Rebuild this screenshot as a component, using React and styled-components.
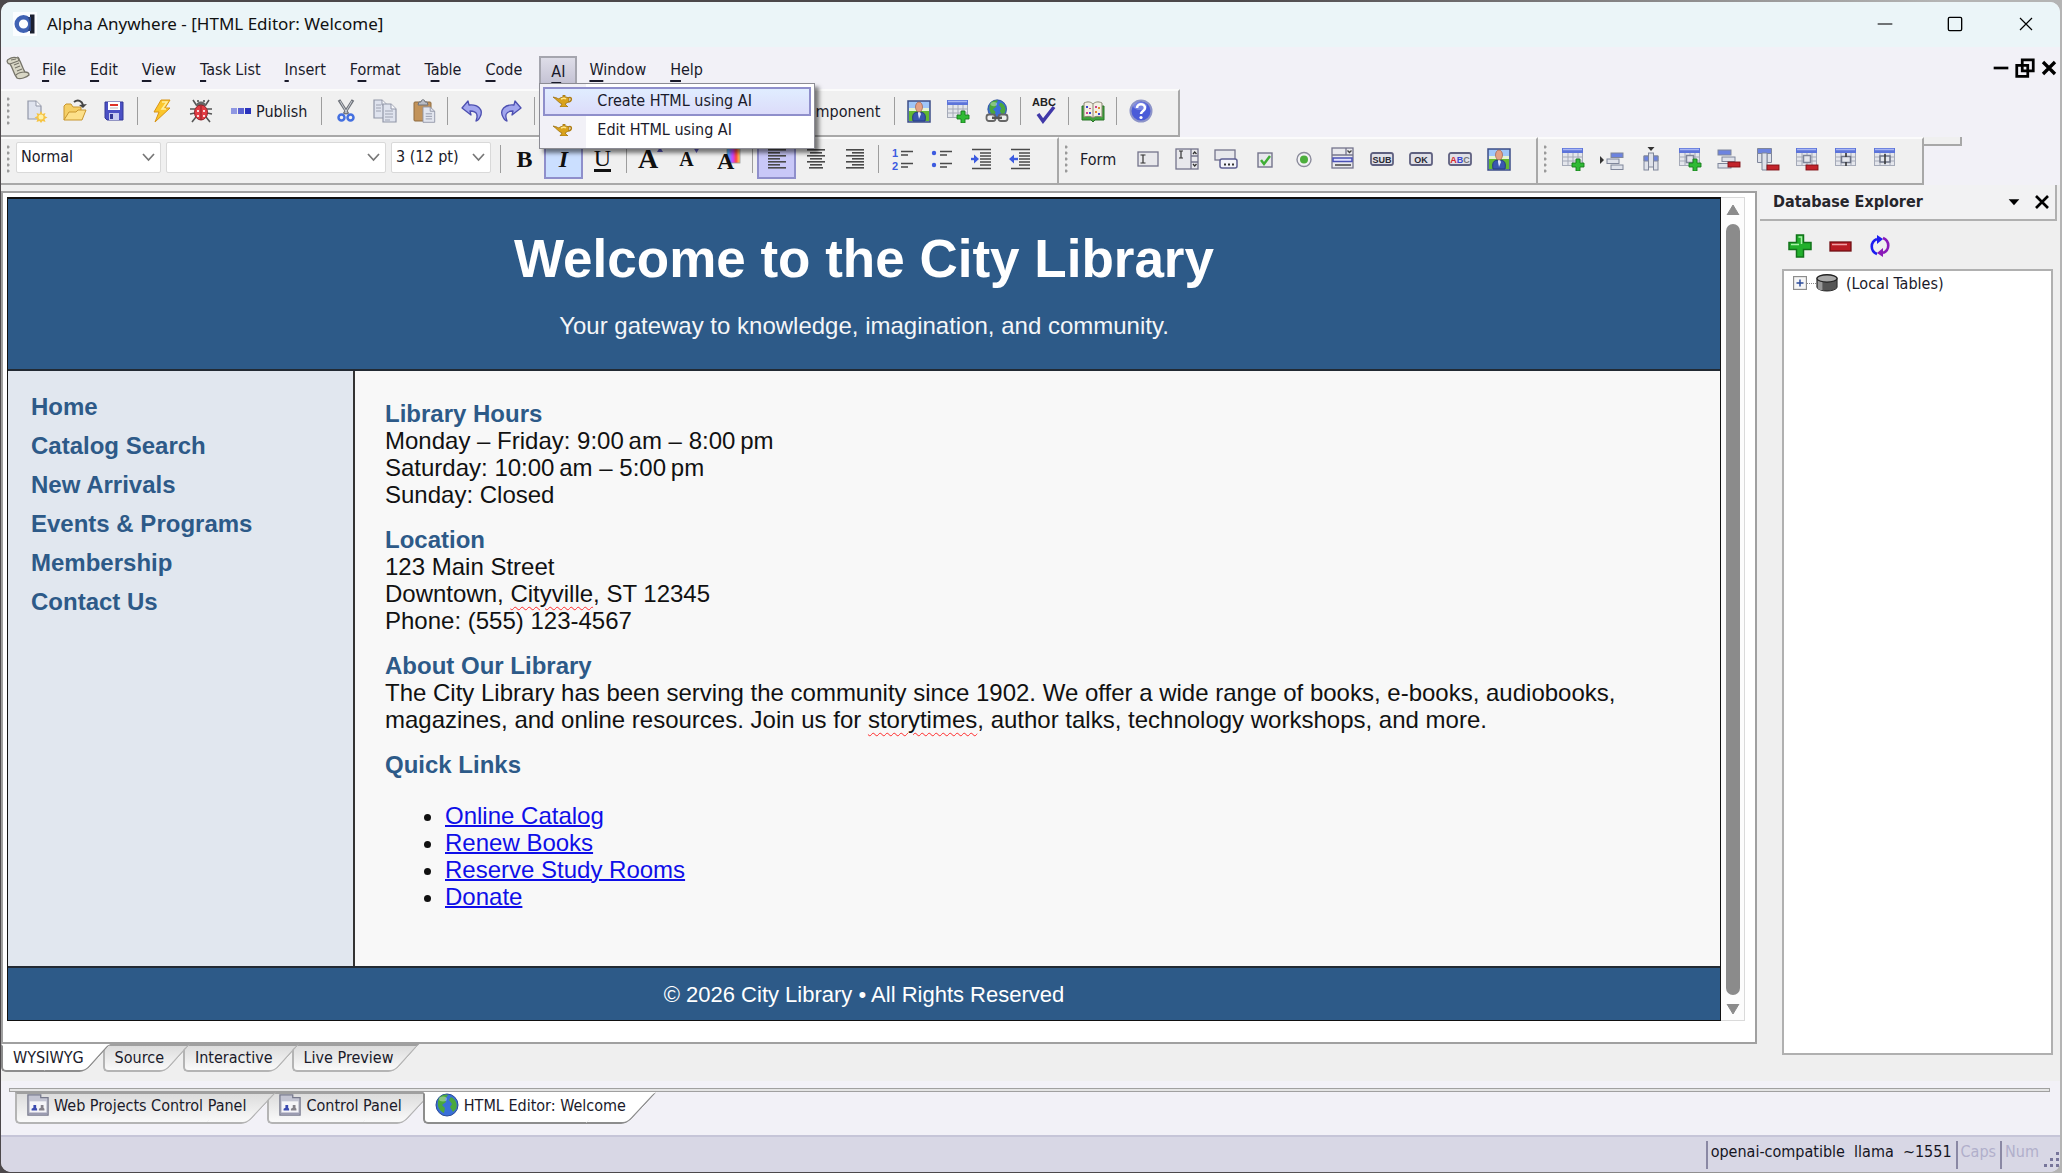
import React from 'react';
import styled, { createGlobalStyle, css } from 'styled-components';

const uiFont = `'DejaVu Sans Condensed', 'DejaVu Sans', 'Noto Sans', sans-serif`;
const pageFont = `'Liberation Sans', Arial, sans-serif`;
const titleFont = `'Noto Sans', 'Open Sans', sans-serif`;

const GlobalStyle = createGlobalStyle`
  * {
    box-sizing: border-box;
  }
  body {
    margin: 0;
    background: #4c484b;
    font-family: ${uiFont};
    font-size: 16px;
    color: #1a1a2a;
  }
  button, select {
    font: inherit;
    color: inherit;
  }
`;

const Desktop = styled.div`
  display: flex;
  min-height: 100vh;
  padding: 2px 2px 1px 1px;
  background: linear-gradient(90deg, #4c484b 0%, #4c484b 60%, #b4b4b4 94%);
`;

const Window = styled.div`
  flex: 1;
  min-width: 0;
  display: flex;
  flex-direction: column;
  background: #f2f1f7;
  border-radius: 10px;
`;

/* title bar */

const TitleBar = styled.header`
  display: flex;
  align-items: center;
  height: 45px;
  padding: 0 12px 2px 12px;
  background: #ebf5f8;
  border-radius: 10px 10px 0 0;
`;

const Title = styled.h1`
  flex: 1;
  margin: 0 0 0 10px;
  font-family: ${titleFont};
  font-size: 17px;
  font-weight: 400;
  color: #111;
`;

const CaptionButton = styled.button`
  display: flex;
  align-items: center;
  justify-content: center;
  width: 70px;
  height: 40px;
  padding: 0;
  border: none;
  background: none;

  &:last-child {
    width: 44px;
    margin-left: 14px;
  }
`;

/* menu */

const MenuBar = styled.nav`
  display: flex;
  align-items: center;
  height: 42px;
  padding: 0 3px 0 5px;
`;

const MenuItem = styled.button`
  position: relative;
  height: 30px;
  padding: 0 12px;
  margin-top: ${props => (props.$open ? '6px' : '4px')};
  border: 2px solid transparent;
  border-width: 2px 0;
  background: none;
  line-height: 24px;

  &::first-letter {
    text-decoration: ${props => (props.$plain ? 'none' : 'underline')};
    text-underline-offset: 5px;
    text-decoration-thickness: 2px;
  }

  u {
    text-underline-offset: 5px;
    text-decoration-thickness: 2px;
  }

  ${props => props.$open && css`
    padding: 0 10px;
    border: 2px solid #a5a5ae;
    border-bottom: none;
    background: linear-gradient(#dedde8, #c2c0d2);
  `}
`;

const MenuWrap = styled.div`
  position: relative;
  margin-left: 5px;
`;

const Dropdown = styled.div`
  position: absolute;
  z-index: 10;
  top: 33px;
  left: 0;
  width: 276px;
  padding: 3px;
  border: 1px solid #8c8c94;
  background: linear-gradient(90deg, #f2f1f7 46px, #fff 46px);
  box-shadow: 4px 4px 4px rgba(0, 0, 0, 0.5);
`;

const DropdownItem = styled.button`
  display: flex;
  align-items: center;
  gap: 24px;
  width: 100%;
  height: 29px;
  padding: 0 8px 2px;
  border: 2px solid ${props => (props.$active ? '#8f8fcb' : 'transparent')};
  background: ${props => (props.$active ? 'linear-gradient(#e0edff, #dcdcfa)' : 'none')};
`;

const MdiButtons = styled.div`
  display: flex;
  align-items: center;
  gap: 5px;
  margin-left: auto;
`;

const FlatButton = styled.button`
  display: flex;
  padding: 0;
  border: none;
  background: none;
`;

/* toolbars */

const ToolbarRow = styled.div`
  display: flex;
  align-items: flex-start;
`;

const Toolbar = styled.div`
  display: flex;
  align-items: center;
  height: 48px;
  padding: 0 18px 4px 4px;
  border-top: 2px solid #fbfbfb;
  border-right: 2px solid #a8a8a8;
  border-bottom: 2px solid #a8a8a8;
  background: #f0f0f0;
`;

const ToolbarStub = styled.div`
  width: 38px;
  height: 9px;
  border-right: 2px solid #a8a8a8;
  border-bottom: 2px solid #a8a8a8;
  background: #f0f0f0;
`;

const Grip = styled.span`
  width: 3px;
  height: 28px;
  margin: 0 6px 0 2px;
  background: radial-gradient(circle at 1px 2px, #9a9a9a 1px, transparent 2px) 0 0 / 3px 6px;
`;

const Separator = styled.span`
  width: 1px;
  height: 28px;
  margin: 0 4px;
  background: #9d9d9d;
`;

const ToolButton = styled.button`
  display: flex;
  align-items: center;
  justify-content: center;
  gap: 4px;
  min-width: 39px;
  height: 40px;
  padding: 0 ${props => (props.$wide ? 8 : 0)}px;
  border: 2px solid ${props => (props.$on ? '#8f8fcb' : 'transparent')};
  background: ${props => props.$on || 'none'};
`;

const CoveredTools = styled.div`
  display: flex;
  justify-content: flex-end;
  width: 351px;
`;

const SelectBox = styled.label`
  position: relative;
  display: flex;
  width: ${props => props.$width}px;
  height: 31px;
  margin: 0 5px 4px 0;

  svg {
    position: absolute;
    right: 5px;
    top: 9px;
    pointer-events: none;
  }
`;

const Select = styled.select`
  appearance: none;
  width: 100%;
  padding: 0 4px 2px;
  border: 1px solid #d9d9d9;
  border-radius: 2px;
  background: #fff;
`;

const ToolLabel = styled.span`
  margin: 0 12px 0 6px;
`;

/* document area */

const Main = styled.main`
  flex: 1;
  display: flex;
  gap: 3px;
  background: #efefef;
`;

const EditorColumn = styled.section`
  flex: 1;
  min-width: 0;
  display: flex;
  flex-direction: column;
  padding: 6px 0 9px;
`;

const DocumentFrame = styled.div`
  flex: 1;
  display: flex;
  padding: 4px 10px 21px 4px;
  border: 2px solid #a0a0a0;
  background: #fff;
`;

const Page = styled.div`
  flex: 1;
  display: flex;
  flex-direction: column;
  border: 1px solid #111;
  border-top-width: 2px;
  background: #f8f8f8;
  font-family: ${pageFont};
  font-size: 24px;
  line-height: 27px;
  color: #111;
`;

const PageHeader = styled.div`
  padding: 29px 20px 30px;
  border-bottom: 2px solid #222a33;
  background: #2d5a88;
  color: #f4f6f8;
  text-align: center;

  h2 {
    margin: 0 0 23px;
    font-size: 53px;
    line-height: 61px;
    color: #fff;
  }

  p {
    margin: 0;
  }
`;

const PageBody = styled.div`
  flex: 1;
  display: flex;
`;

const PageNav = styled.div`
  width: 347px;
  padding: 22px 23px;
  border-right: 2px solid #333;
  background: #e1e7ef;
`;

const NavEntry = styled.div`
  margin-bottom: 12px;
  font-weight: 700;
  color: #2d5a88;
`;

const Article = styled.div`
  flex: 1;
  padding: 29px 30px;
`;

const Block = styled.section`
  margin-bottom: 18px;

  h3 {
    margin: 0;
    font-size: 24px;
    color: #2d5a88;
  }

  p {
    margin: 0;
  }

  ul {
    margin: 24px 0 0;
    padding-left: 60px;
  }

  a {
    color: #0f0fe8;
    text-decoration-thickness: 2px;
  }
`;

const Misspelled = styled.span`
  text-decoration: underline wavy #ff2a2a 1px;
  text-underline-offset: 4px;
`;

const PageFooter = styled.div`
  padding: 13px 20px 12px;
  border-top: 2px solid #222a33;
  background: #2d5a88;
  font-size: 22px;
  color: #fff;
  text-align: center;
`;

const Scrollbar = styled.div`
  display: flex;
  flex-direction: column;
  align-items: center;
  gap: 9px;
  width: 24px;
  padding: 6px 0 5px;
  border: 1px solid #dadada;
  border-left: none;
  background: #fcfcfc;
`;

const ScrollThumb = styled.div`
  flex: 1;
  width: 14px;
  border-radius: 7px;
  background: #8b8b8b;
`;

/* slanted tabs */

const TabStrip = styled.div`
  display: flex;
  align-items: flex-start;
`;

const TabButton = styled.button`
  position: relative;
  z-index: ${props => props.$layer};
  display: flex;
  align-items: center;
  gap: 5px;
  height: ${props => (props.$tall ? 32 : 28)}px;
  padding: 0 ${props => (props.$tall ? 16 : 14)}px ${props => (props.$tall ? 6 : 2)}px 12px;
  margin-right: ${props => (props.$tall ? 5 : 5)}px;
  border: none;
  background: none;

  &::before,
  &::after {
    content: '';
    position: absolute;
    z-index: -1;
    top: 0;
    bottom: 0;
    border: 2px solid ${props => (props.$active ? '#8d8d8d' : '#b4b4b4')};
    border-top-color: ${props => (props.$active ? '#fff' : '#a0a0a0')};
    background: ${props => (props.$active ? '#fff' : 'linear-gradient(#dcdcdc, #fafafa)')};
  }

  &::before {
    left: 0;
    right: 24px;
    border-right: none;
    border-radius: 0 0 0 5px;
  }

  &::after {
    width: 40px;
    right: 0;
    border-left: none;
    border-radius: 0 0 6px 0;
    transform: skewX(${props => (props.$tall ? -43 : -42)}deg);
  }
`;

const TabLabel = styled.span`
  position: relative;
  z-index: 1;
`;

const TabIcon = styled.span`
  position: relative;
  z-index: 1;
  display: flex;
`;

const WindowTabs = styled.div`
  height: 54px;
  padding: 7px 10px 0 8px;
`;

const WindowTabsRail = styled.div`
  height: 4px;
  border: 1px solid #a0a0a0;
  background: #e4e4e4;
`;

const WindowTabStrip = styled(TabStrip)`
  padding-left: 6px;
`;

/* database explorer */

const Explorer = styled.aside`
  display: flex;
  flex-direction: column;
  width: 300px;
  padding-bottom: 26px;
`;

const ExplorerHeader = styled.div`
  display: flex;
  align-items: center;
  gap: 12px;
  height: 36px;
  margin-right: 3px;
  padding: 0 5px 1px 13px;
  border-right: 2px solid #b0b0b0;
  border-bottom: 2px solid #b0b0b0;
  background: #f2f2f3;

  h2 {
    flex: 1;
    margin: 0;
    font-size: 16px;
    font-weight: 700;
    color: #26262c;
  }
`;

const ExplorerTools = styled.div`
  display: flex;
  gap: 16px;
  padding: 13px 28px 11px;
`;

const Tree = styled.div`
  flex: 1;
  margin: 0 7px 0 22px;
  padding: 0 9px;
  border: 2px solid #b0b0b0;
  background: #fff;
`;

const TreeNode = styled.div`
  display: flex;
  align-items: center;
  height: 24px;
`;

const TreeLine = styled.span`
  width: 9px;
  border-top: 1px dotted #888;
`;

const NodeLabel = styled.span`
  margin-left: 8px;
`;

/* status bar */

const StatusBar = styled.footer`
  display: flex;
  align-items: center;
  justify-content: flex-end;
  height: 37px;
  border-top: 2px solid #c6c5d8;
  border-radius: 0 0 10px 10px;
  background: #d8d7e5;
`;

const StatusCell = styled.span`
  height: 28px;
  padding: 0 4px 0 3px;
  border-left: 2px solid #8a88a4;
  line-height: 22px;
  white-space: pre;
  color: ${props => (props.$dim ? '#b1afcb' : '#15151f')};
`;

const ResizeGrip = styled.svg`
  align-self: flex-end;
  margin: 0 0 4px;
`;

/* icons */

const Icon = ({ size = 24, children }) => (
  <svg width={size} height={size} viewBox="0 0 24 24" fill="none" aria-hidden="true">
    {children}
  </svg>
);

const LogoIcon = () => (
  <Icon>
    <rect width="24" height="24" fill="#fbfdff" />
    <circle cx="10.500" cy="12" r="6.800" stroke="#3f62b4" strokeWidth="4.400" />
    <path d="M17 2.500h4.500v19H17z" fill="#1c2030" />
    <path d="M14.500 5c3 4 3 10 0 14H18V5z" fill="#2c447e" />
  </Icon>
);

const ScrollIcon = () => (
  <Icon>
    <path d="M3 3c-3 1-2 5 1 5 3 4 3 9 7 14 3 2 10-1 12-3 0-3-3-3-4-3-3-4-3-9-7-14-3-1-7-.5-9 1z" fill="#d9d7c6" stroke="#77756a" strokeWidth="1.300" />
    <path d="M4 8l8-3c2-1 1-4-1-4M10 19c2-2 5-3 9-3M8 9l5-2M9 12l5-2M11 15l5-2M5 4l5-1" stroke="#77756a" strokeWidth="1.200" />
  </Icon>
);

const PageShape = ({ x = 0, y = 0 }) => (
  <g transform={`translate(${x} ${y})`}>
    <path d="M0 0h8l5 5v13H0z" fill="#dfe3ee" stroke="#9297a8" strokeWidth="1.200" />
    <path d="M8 0v5h5" fill="#f7f8fc" stroke="#9297a8" />
  </g>
);

const NewIcon = () => (
  <Icon>
    <PageShape x={4} y={2} />
    <path d="M17 12l1.500 3 3-1-1 3 3 1.500-3 1.500 1 3-3-1-1.500 2-1.500-2-3 1 1-3-3-1.500 3-1.500-1-3 3 1z" fill="#f6c443" />
    <circle cx="17" cy="18" r="2.500" fill="#fff1a8" />
  </Icon>
);

const OpenIcon = () => (
  <Icon>
    <path d="M1 21V7l2-2h5l2 3h8v4" fill="#f5cf66" stroke="#c8962e" />
    <path d="M1 21l5-8h7l2-2h8l-4 10z" fill="#fce08a" stroke="#c8962e" />
    <path d="M11 3c4-3 8-1 9 3" stroke="#444" strokeWidth="2" />
    <path d="M16 6l8-1-4 4z" fill="#444" />
  </Icon>
);

const SaveIcon = () => (
  <Icon>
    <path d="M3 3h18v18H5l-2-2z" fill="#4b50c4" stroke="#343896" />
    <rect x="6" y="3" width="12" height="8" fill="#fff" />
    <path d="M8 6h8" stroke="#df3328" strokeWidth="2" />
    <path d="M8 9h8" stroke="#bbb" />
    <rect x="7" y="14" width="10" height="7" fill="#c8cbf0" />
    <rect x="8" y="15" width="3" height="5" fill="#343896" />
  </Icon>
);

const BoltIcon = () => (
  <Icon>
    <path d="M11 1h9l-5 8h5L5 23l4-10H4z" fill="#fbc62c" stroke="#d99414" />
    <path d="M12 3h5l-5 7h4" stroke="#ffef9d" strokeWidth="1.500" />
  </Icon>
);

const BugIcon = () => (
  <Icon>
    <path d="M8 7L4 1M16 7l4-6M6 10H1M18 10h5M6 14l-5 1M18 14l5 1M7 18l-4 5M17 18l4 5M9 3V1M15 3V1" stroke="#555" strokeWidth="1.600" />
    <path d="M7 7c0-6 10-6 10 0z" fill="#666" />
    <ellipse cx="12" cy="13.500" rx="6.500" ry="7.500" fill="#e23b43" stroke="#8d2026" />
    <path d="M12 7v14" stroke="#8d2026" />
    <path d="M9 11v2M15 11v2M9 16v2M15 16v2" stroke="#fff" strokeWidth="1.600" />
  </Icon>
);

const PublishIcon = () => (
  <svg width="22" height="24" viewBox="0 0 22 24" aria-hidden="true">
    <rect x="1" y="9" width="6" height="6" fill="#8f97e2" />
    <rect x="8" y="9" width="6" height="6" fill="#5b63d2" />
    <rect x="15" y="9" width="6" height="6" fill="#2a33bd" />
  </svg>
);

const CutIcon = () => (
  <Icon>
    <path d="M5 1l9 14M19 1l-9 14" stroke="#6f737a" strokeWidth="3" />
    <path d="M6 2l7 12M18 2l-7 12" stroke="#c9cdd4" />
    <circle cx="7.500" cy="18.500" r="3" stroke="#4470e0" strokeWidth="2.500" />
    <circle cx="16.500" cy="18.500" r="3" stroke="#4470e0" strokeWidth="2.500" />
  </Icon>
);

const CopyIcon = () => (
  <Icon>
    <PageShape x={1} y={1} />
    <PageShape x={10} y={5} />
    <path d="M3 6h5M3 9h5M3 12h5M12 12h8M12 15h8M12 18h8M12 21h5" stroke="#9ea3b2" />
  </Icon>
);

const PasteIcon = () => (
  <Icon>
    <rect x="2" y="3" width="17" height="19" rx="1" fill="#c2935a" stroke="#8e6a3e" />
    <path d="M6 6l1-3h2c0-3 4-3 4 0h2l1 3z" fill="#b9bcc4" stroke="#6f737a" />
    <g transform="translate(11 8) scale(.9 .85)">
      <path d="M0 0h8l5 5v13H0z" fill="#e2e5ee" stroke="#8f94a5" />
      <path d="M8 0v5h5M3 8h7M3 11h7M3 14h7" stroke="#8f94a5" />
    </g>
  </Icon>
);

const UndoShape = () => (
  <path d="M2 9L8 2l1 4c9-1 15 5 11 12-1 2-2 4-4 4 2-5 2-10-6-10l1 4z" fill="#a2a6ee" stroke="#4c4fb0" strokeWidth="1.300" strokeLinejoin="round" />
);

const UndoIcon = () => <Icon><UndoShape /></Icon>;
const RedoIcon = () => <Icon><g transform="translate(24 0) scale(-1 1)"><UndoShape /></g></Icon>;

const PictureIcon = () => (
  <Icon>
    <rect x="1" y="2" width="22" height="21" fill="#9fc6f8" stroke="#3d4d86" strokeWidth="1.500" />
    <path d="M2 12h20v10H2z" fill="#63b832" />
    <path d="M2 9h20v3H2z" fill="#e6f4d2" />
    <path d="M6 22c-1-6 0-9 6-9s7 3 6 9z" fill="#3a56b0" stroke="#243a80" />
    <path d="M11 13h2l1 2-2 5-1-5z" fill="#dfe6ff" />
    <ellipse cx="12" cy="8" rx="3.500" ry="5" fill="#e3a184" stroke="#a0604c" strokeWidth=".700" />
  </Icon>
);

const GlobeShape = () => (
  <>
    <circle cx="12" cy="12" r="11" fill="#3a6fd8" stroke="#2a4c98" />
    <path d="M4 5c3-4 8-4 9-3l-3 4 1 3-4 3 3 3-1 5c-5-2-8-8-5-15zM16 4c5 2 7 8 5 12l-3 3-3-5 2-3-3-4z" fill="#4aa83c" />
    <ellipse cx="8" cy="6" rx="4" ry="2.500" fill="#fff" opacity=".35" />
  </>
);

const GlobeIcon = () => <Icon><GlobeShape /></Icon>;

const LinkIcon = () => (
  <Icon>
    <g transform="translate(2 0) scale(.85)"><GlobeShape /></g>
    <rect x="1.500" y="15.500" width="9" height="6.500" rx="2.500" fill="#eee" stroke="#666" strokeWidth="1.800" />
    <rect x="13.500" y="15.500" width="9" height="6.500" rx="2.500" fill="#eee" stroke="#666" strokeWidth="1.800" />
    <path d="M7 18.800h10" stroke="#555" strokeWidth="2.500" />
  </Icon>
);

const GridShape = ({ hole }) => (
  <>
    <rect x="1.500" y="1.500" width="20" height="17" fill="#e4e6ec" stroke="#a5aab8" />
    <path d="M1 1h21v5H1z" fill="#5c74da" />
    <path d="M2 2.500h19" stroke="#a9b7f3" strokeWidth="1.500" />
    <path d="M2 10h19M2 14h19M7 6v12M12 6v12M17 6v12" stroke="#a5aab8" />
    {hole && <rect x="8.500" y="8.500" width="7" height="7" fill="#e4e6ec" stroke="#7f869a" strokeWidth="1.500" />}
  </>
);

const PlusBadge = () => (
  <path d="M15 12h4v4h4v4h-4v4h-4v-4h-4v-4h4z" fill="#2fba35" stroke="#167a1b" strokeWidth=".900" />
);

const MinusBadge = ({ y = 16 }) => (
  <rect x="11" y={y} width="12" height="5" fill="#c3242c" stroke="#7e1116" strokeWidth=".900" />
);

const TablePlusIcon = () => <Icon><GridShape /><PlusBadge /></Icon>;
const CellPlusIcon = () => <Icon><GridShape hole /><PlusBadge /></Icon>;
const CellMinusIcon = () => <Icon><GridShape hole /><MinusBadge y={18} /></Icon>;

const MergeIcon = () => (
  <Icon>
    <GridShape />
    <rect x="7.500" y="9.500" width="9" height="6" fill="#e4e6ec" stroke="#6f7688" strokeWidth="1.500" />
    <path d="M12 6v4M12 15v4" stroke="#333" strokeWidth="1.500" />
  </Icon>
);

const SplitIcon = () => (
  <Icon>
    <GridShape />
    <path d="M7 9h10v6H7z" fill="#e4e6ec" stroke="#6f7688" strokeWidth="1.500" />
    <path d="M12 7v10" stroke="#333" strokeWidth="1.500" />
  </Icon>
);

const RowShapes = () => (
  <g stroke="#7f869a">
    <rect x="4" y="4" width="13" height="5" fill="#6c83df" />
    <rect x="8" y="11" width="13" height="4.500" fill="#dfe2ea" />
    <rect x="4" y="17.500" width="13" height="4.500" fill="#dfe2ea" />
  </g>
);

const RowInsertIcon = () => (
  <Icon>
    <path d="M0 9l4 4-4 4z" fill="#333" />
    <g stroke="#7f869a">
      <rect x="11" y="6" width="12" height="4.500" fill="#6c83df" />
      <rect x="7" y="12" width="12" height="4.500" fill="#dfe2ea" />
      <rect x="11" y="18" width="12" height="4.500" fill="#dfe2ea" />
    </g>
  </Icon>
);

const RowDeleteIcon = () => <Icon><g transform="translate(-3 -1)"><RowShapes /></g><MinusBadge y={15} /></Icon>;

const ColumnShapes = () => (
  <g stroke="#7f869a">
    <rect x="5" y="9" width="4.500" height="14" fill="#dfe2ea" />
    <rect x="14.500" y="9" width="4.500" height="14" fill="#dfe2ea" />
    <rect x="9.500" y="6" width="5" height="14" fill="#dfe2ea" />
    <path d="M5 9h4.500v5H5zM14.500 9H19v5h-4.500z" fill="#6c83df" />
  </g>
);

const ColumnInsertIcon = () => <Icon><path d="M8.500 0h7L12 4z" fill="#333" /><ColumnShapes /></Icon>;

const ColumnDeleteIcon = () => (
  <Icon>
    <g stroke="#7f869a">
      <path d="M1.500 6.500H6v9H1.500zM11 6.500h4.500v9H11z" fill="#dfe2ea" />
      <path d="M1.500 1.500h14v5h-14z" fill="#6c83df" />
      <path d="M6 6v17h5V6z" fill="#dfe2ea" />
    </g>
    <MinusBadge y={18} />
  </Icon>
);

const SpellIcon = () => (
  <svg width="26" height="30" viewBox="0 0 26 30" aria-hidden="true">
    <text x="0" y="10" fontFamily="Liberation Sans" fontWeight="700" fontSize="11" fill="#222">ABC</text>
    <path d="M6 18l5 7L22 11" stroke="#4038a8" strokeWidth="3.500" fill="none" />
  </svg>
);

const BookIcon = () => (
  <Icon>
    <path d="M1 7h22v14H14l-2 2-2-2H1z" fill="#3fa13c" stroke="#2a7428" />
    <path d="M3 4c4-2 7-1 9 1 2-2 5-3 9-1v14c-4-1-7-1-9 1-2-2-5-2-9-1z" fill="#f3efe4" stroke="#8a8672" />
    <path d="M12 5v14" stroke="#8a8672" />
    <path d="M6 7v2M18 14v2M9 13v2" stroke="#3a48d0" strokeWidth="2" />
    <path d="M6 13v2M15 7v2M9 9v1" stroke="#d0408a" strokeWidth="2" />
    <path d="M18 8v2M15 12v2" stroke="#e08a30" strokeWidth="2" />
  </Icon>
);

const HelpIcon = () => (
  <Icon>
    <circle cx="12" cy="12" r="10.500" fill="#4a5bd8" stroke="#8c93c8" strokeWidth="2" />
    <ellipse cx="11" cy="7" rx="7" ry="4" fill="#fff" opacity=".25" />
    <path d="M8 9c0-5 8-5 8 0 0 3-4 3-4 6" stroke="#fff" strokeWidth="2.600" />
    <circle cx="12" cy="18.500" r="1.600" fill="#fff" />
  </Icon>
);

const LampIcon = () => (
  <svg width="20" height="12" viewBox="0 0 20 12" aria-hidden="true">
    <path d="M0 2l4 1c1 1 2 1 3 0l3-1V0h2v2c3 0 4 1 4 3s-2 3-4 4l3 3H7l2-3C6 8 4 5 0 2z" fill="#d9a21b" stroke="#94690c" strokeWidth=".700" />
    <path d="M15 3c5-2 4 4 0 4" fill="none" stroke="#b07f14" strokeWidth="1.500" />
    <path d="M8 4c2-1 4-1 5 0" fill="none" stroke="#ffe58a" strokeWidth="1.500" />
  </svg>
);

const Chevron = () => (
  <svg width="15" height="12" viewBox="0 0 15 12" fill="none" aria-hidden="true">
    <path d="M2 3l5.500 6L13 3" stroke="#777" strokeWidth="1.700" />
  </svg>
);

const Glyph = styled.span`
  font-family: 'Liberation Serif', 'Times New Roman', serif;
  font-size: ${props => props.$size || 24}px;
  line-height: 28px;
  font-weight: 700;
  font-style: ${props => (props.$italic ? 'italic' : 'normal')};
  color: #111;

  ${props => props.$underline && css`
    border-bottom: 3px solid #111;
    font-weight: 400;
    line-height: 22px;
  `}
`;

const FontMark = styled.svg`
  flex: none;
  align-self: flex-start;
  margin: 6px 0 0 -5px;
`;

const Lines = ({ rows }) => (
  <Icon>
    {rows.map(([x, w], i) => (
      <rect key={i} x={x} y={2 + i * 3} width={w} height="1.600" fill="#4a4a4a" />
    ))}
  </Icon>
);

const alignLeft = [[3, 18], [3, 12], [3, 18], [3, 12], [3, 18], [3, 12], [3, 18]];
const alignCenter = [[3, 18], [6, 12], [3, 18], [6, 12], [3, 18], [6, 12], [5, 14]];
const alignRight = [[3, 18], [9, 12], [3, 18], [9, 12], [3, 18], [9, 12], [3, 18]];

const ListLines = () => (
  <path d="M10 4.500h12M10 8h7M10 16.500h12M10 20h7" stroke="#4a4a4a" strokeWidth="1.700" />
);

const NumberListIcon = () => (
  <Icon>
    <text x="1" y="10" fontFamily="Liberation Sans" fontWeight="700" fontSize="11" fill="#3c5be0">1</text>
    <text x="1" y="23" fontFamily="Liberation Sans" fontWeight="700" fontSize="11" fill="#3c5be0">2</text>
    <ListLines />
  </Icon>
);

const BulletListIcon = () => (
  <Icon>
    <circle cx="4" cy="6" r="2.200" fill="#3c5be0" />
    <circle cx="4" cy="18" r="2.200" fill="#3c5be0" />
    <ListLines />
  </Icon>
);

const IndentIcon = ({ out }) => (
  <Icon>
    <path d="M3 2.500h19M11 6h11M11 9h11M11 12h11M11 15h11M11 18h11M3 21.500h19" stroke="#4a4a4a" strokeWidth="1.600" />
    <path d={out ? 'M10 12H5' : 'M2 12h4'} stroke="#3c5be0" strokeWidth="2.400" />
    <path d={out ? 'M6 7.500v9L1 12z' : 'M5 7.500v9l5-4.500z'} fill="#3c5be0" />
  </Icon>
);

const fieldStroke = '#74748c';

const TextFieldIcon = () => (
  <Icon>
    <rect x="2" y="5" width="20" height="14" fill="#e8e8ec" stroke={fieldStroke} strokeWidth="1.300" />
    <path d="M4.500 8h2l.5.500.5-.5h2M7 8v8M4.500 16h2l.5-.5.5.5h2" stroke="#333" strokeWidth="1.200" />
  </Icon>
);

const TextAreaIcon = () => (
  <Icon>
    <rect x="1" y="2" width="22" height="20" fill="#e8e8ec" stroke={fieldStroke} strokeWidth="1.300" />
    <path d="M4 4h4M6 4v7M4 11h4" stroke="#333" strokeWidth="1.200" />
    <path d="M16 2v20M16 9h7M16 15h7" stroke={fieldStroke} strokeWidth="1.300" />
    <path d="M18 7l1.700-2 1.800 2M18 17l1.700 2 1.800-2" stroke="#333" strokeWidth="1.300" />
  </Icon>
);

const BrowseFieldIcon = () => (
  <Icon>
    <rect x="1" y="3" width="20" height="10" fill="#e8e8ec" stroke={fieldStroke} strokeWidth="1.300" />
    <rect x="6" y="12" width="17" height="9" rx="2" fill="#f4f4fa" stroke="#5d5f92" strokeWidth="1.500" />
    <path d="M10 17.500h2M14 17.500h2M18 17.500h2" stroke="#333" strokeWidth="2" />
  </Icon>
);

const CheckFieldIcon = () => (
  <Icon>
    <rect x="5" y="6" width="14" height="14" fill="#e8e8ec" stroke={fieldStroke} strokeWidth="1.400" />
    <path d="M8 13l3 4 6-8" stroke="#3fae35" strokeWidth="2.500" />
  </Icon>
);

const RadioFieldIcon = () => (
  <Icon>
    <circle cx="12" cy="12.500" r="7" fill="#f2f2f4" stroke="#8c8c9c" strokeWidth="1.400" />
    <circle cx="12" cy="12.500" r="4" fill="#4cae3c" />
  </Icon>
);

const ListFieldIcon = () => (
  <Icon>
    <rect x="1" y="1" width="21" height="20" fill="#e8e8ec" stroke={fieldStroke} strokeWidth="1.300" />
    <path d="M15 1v7M1 8h21" stroke={fieldStroke} strokeWidth="1.300" />
    <path d="M16.500 3.500l2 2 2-2M4 18h16" stroke="#444" strokeWidth="1.400" />
    <rect x="2" y="11" width="19" height="3.500" fill="#dfe0ff" stroke="#4a50b4" strokeWidth="1.500" />
  </Icon>
);

const PillIcon = ({ children }) => (
  <Icon>
    <rect x="1" y="6" width="22" height="12" rx="2" fill="#e0e0e8" stroke="#5f6180" strokeWidth="1.800" />
    <text x="12" y="15.500" textAnchor="middle" fontFamily="Liberation Sans" fontWeight="700" fontSize="9" fill="#2a2a35">
      {children}
    </text>
  </Icon>
);

const CrossIcon = ({ size = 16, weight = 3 }) => (
  <Icon size={size}>
    <path d="M3 3l18 18M21 3L3 21" stroke="#000" strokeWidth={weight} />
  </Icon>
);

const PanelIcon = () => (
  <Icon size={22}>
    <path d="M1 4V1h14v3h8v19H1z" fill="#c3c4d2" stroke="#77798c" strokeWidth="1.400" />
    <rect x="3" y="8" width="18" height="12" fill="#f5f5f8" />
    <path d="M5 18v-2l2-1v-3h3v3l1 1v2z" fill="#3a4ab0" />
    <path d="M13 18v-2l2-1v-3h3v3l1 1v2z" fill="#85828a" />
    <path d="M2 21.500h20" stroke="#9a9bb0" strokeWidth="2" />
  </Icon>
);

const RefreshIcon = () => (
  <Icon>
    <path d="M9 20C2 17 2 8 9 5" stroke="#1c1cf0" strokeWidth="2.600" />
    <path d="M9 1l6 4-6 5z" fill="#1c1cf0" />
    <path d="M15 4c7 3 7 12 0 15" stroke="#8a1ab8" strokeWidth="2.600" />
    <path d="M15 23l-6-4 6-5z" fill="#8a1ab8" />
  </Icon>
);

const DatabaseIcon = () => (
  <Icon size={22}>
    <path d="M1 7v10c3 5 19 5 22 0V7z" fill="#555" stroke="#222" />
    <path d="M2 8h5v12c-3 0-5-1-5-3z" fill="#999" />
    <ellipse cx="12" cy="7" rx="11" ry="4" fill="#a8a8a8" stroke="#222" strokeWidth="1.400" />
  </Icon>
);

const navEntries = ['Home', 'Catalog Search', 'New Arrivals', 'Events & Programs', 'Membership', 'Contact Us'];
const quickLinks = ['Online Catalog', 'Renew Books', 'Reserve Study Rooms', 'Donate'];
const viewTabs = ['WYSIWYG', 'Source', 'Interactive', 'Live Preview'];

const Tool = ({ label, icon, on }) => (
  <ToolButton type="button" aria-label={label} $on={on}>{icon}</ToolButton>
);

const App = () => (
  <>
    <GlobalStyle />
    <Desktop>
      <Window>
        <TitleBar>
          <LogoIcon />
          <Title>Alpha Anywhere - [HTML Editor: Welcome]</Title>
          <CaptionButton type="button" aria-label="Minimize">
            <Icon size={16}><path d="M1 12h22" stroke="#000" strokeWidth="1.600" /></Icon>
          </CaptionButton>
          <CaptionButton type="button" aria-label="Maximize">
            <Icon size={16}><rect x="2" y="2" width="20" height="20" rx="2" stroke="#000" strokeWidth="2" /></Icon>
          </CaptionButton>
          <CaptionButton type="button" aria-label="Close">
            <CrossIcon weight={1.8} />
          </CaptionButton>
        </TitleBar>

        <MenuBar>
          <ScrollIcon />
          <MenuItem type="button">File</MenuItem>
          <MenuItem type="button">Edit</MenuItem>
          <MenuItem type="button">View</MenuItem>
          <MenuItem type="button">Task List</MenuItem>
          <MenuItem type="button">Insert</MenuItem>
          <MenuItem type="button" $plain>F<u>o</u>rmat</MenuItem>
          <MenuItem type="button" $plain>T<u>a</u>ble</MenuItem>
          <MenuItem type="button">Code</MenuItem>
          <MenuWrap>
            <MenuItem type="button" aria-expanded="true" $open>AI</MenuItem>
            <Dropdown>
              <DropdownItem type="button" $active><LampIcon />Create HTML using AI</DropdownItem>
              <DropdownItem type="button"><LampIcon />Edit HTML using AI</DropdownItem>
            </Dropdown>
          </MenuWrap>
          <MenuItem type="button">Window</MenuItem>
          <MenuItem type="button">Help</MenuItem>
          <MdiButtons>
            <FlatButton type="button" aria-label="Minimize document">
              <Icon size={16}><path d="M1 12h22" stroke="#000" strokeWidth="4" /></Icon>
            </FlatButton>
            <FlatButton type="button" aria-label="Restore document">
              <Icon size={22}>
                <path d="M9 3h12v12H9zM3 9h12v12H3z" stroke="#000" strokeWidth="3" />
              </Icon>
            </FlatButton>
            <FlatButton type="button" aria-label="Close document"><CrossIcon weight={5} /></FlatButton>
          </MdiButtons>
        </MenuBar>

        <ToolbarRow>
          <Toolbar>
            <Grip />
            <Tool label="New" icon={<NewIcon />} />
            <Tool label="Open" icon={<OpenIcon />} />
            <Tool label="Save" icon={<SaveIcon />} />
            <Separator />
            <Tool label="Run" icon={<BoltIcon />} />
            <Tool label="Debug" icon={<BugIcon />} />
            <ToolButton type="button" $wide><PublishIcon />Publish</ToolButton>
            <Separator />
            <Tool label="Cut" icon={<CutIcon />} />
            <Tool label="Copy" icon={<CopyIcon />} />
            <Tool label="Paste" icon={<PasteIcon />} />
            <Separator />
            <Tool label="Undo" icon={<UndoIcon />} />
            <Tool label="Redo" icon={<RedoIcon />} />
            <Separator />
            <CoveredTools>
              <ToolButton type="button" $wide>Component</ToolButton>
            </CoveredTools>
            <Separator />
            <Tool label="Image" icon={<PictureIcon />} />
            <Tool label="Table" icon={<TablePlusIcon />} />
            <Tool label="Link" icon={<LinkIcon />} />
            <Separator />
            <Tool label="Spelling" icon={<SpellIcon />} />
            <Separator />
            <Tool label="Dictionary" icon={<BookIcon />} />
            <Separator />
            <Tool label="Help" icon={<HelpIcon />} />
          </Toolbar>
        </ToolbarRow>

        <ToolbarRow>
          <Toolbar>
            <Grip />
            <SelectBox $width={145}>
              <Select aria-label="Style"><option>Normal</option></Select>
              <Chevron />
            </SelectBox>
            <SelectBox $width={220}>
              <Select aria-label="Font"><option></option></Select>
              <Chevron />
            </SelectBox>
            <SelectBox $width={100}>
              <Select aria-label="Size"><option>3 (12 pt)</option></Select>
              <Chevron />
            </SelectBox>
            <Separator />
            <Tool label="Bold" icon={<Glyph>B</Glyph>} />
            <Tool label="Italic" icon={<Glyph $italic>I</Glyph>} on="#cbdfff" />
            <Tool label="Underline" icon={<Glyph $underline>U</Glyph>} />
            <Separator />
            <ToolButton type="button" aria-label="Grow font">
              <Glyph $size={28}>A</Glyph>
              <FontMark width="6" height="5" viewBox="0 0 6 5"><path d="M0 5l3-5 3 5z" fill="#5a58b8" /></FontMark>
            </ToolButton>
            <ToolButton type="button" aria-label="Shrink font">
              <Glyph $size={20}>A</Glyph>
              <FontMark width="7" height="6" viewBox="0 0 7 6"><path d="M0 0h7L3.500 6z" fill="#5a58b8" /></FontMark>
            </ToolButton>
            <ToolButton type="button" aria-label="Font color">
              <Icon>
                <defs>
                  <linearGradient id="spectrum">
                    <stop offset="0" stopColor="#3cf" />
                    <stop offset=".45" stopColor="#c4f" />
                    <stop offset=".7" stopColor="#f44" />
                    <stop offset="1" stopColor="#fd5" />
                  </linearGradient>
                </defs>
                <rect x="10" y="1" width="13" height="15" fill="url(#spectrum)" stroke="#999" strokeWidth=".800" />
                <text x="0" y="22" fontFamily="Liberation Serif" fontWeight="700" fontSize="24" fill="#111">A</text>
              </Icon>
            </ToolButton>
            <Separator />
            <Tool label="Align left" icon={<Lines rows={alignLeft} />} on="#c9c8f8" />
            <Tool label="Align center" icon={<Lines rows={alignCenter} />} />
            <Tool label="Align right" icon={<Lines rows={alignRight} />} />
            <Separator />
            <Tool label="Numbered list" icon={<NumberListIcon />} />
            <Tool label="Bulleted list" icon={<BulletListIcon />} />
            <Tool label="Indent" icon={<IndentIcon />} />
            <Tool label="Outdent" icon={<IndentIcon out />} />
          </Toolbar>
          <Toolbar>
            <Grip />
            <ToolLabel>Form</ToolLabel>
            <Tool label="Text field" icon={<TextFieldIcon />} />
            <Tool label="Text area" icon={<TextAreaIcon />} />
            <Tool label="File field" icon={<BrowseFieldIcon />} />
            <Tool label="Check box" icon={<CheckFieldIcon />} />
            <Tool label="Radio button" icon={<RadioFieldIcon />} />
            <Tool label="List" icon={<ListFieldIcon />} />
            <Tool label="Submit button" icon={<PillIcon>SUB</PillIcon>} />
            <Tool label="Button" icon={<PillIcon>OK</PillIcon>} />
            <Tool
              label="Label"
              icon={<PillIcon><tspan fill="#d8262e">A</tspan><tspan fill="#3a48d0">B</tspan><tspan fill="#777">C</tspan></PillIcon>}
            />
            <Tool label="Image field" icon={<PictureIcon />} />
          </Toolbar>
          <Toolbar>
            <Grip />
            <Tool label="Insert table" icon={<TablePlusIcon />} />
            <Tool label="Insert row" icon={<RowInsertIcon />} />
            <Tool label="Insert column" icon={<ColumnInsertIcon />} />
            <Tool label="Insert cell" icon={<CellPlusIcon />} />
            <Tool label="Delete row" icon={<RowDeleteIcon />} />
            <Tool label="Delete column" icon={<ColumnDeleteIcon />} />
            <Tool label="Delete cell" icon={<CellMinusIcon />} />
            <Tool label="Merge cells" icon={<MergeIcon />} />
            <Tool label="Split cell" icon={<SplitIcon />} />
          </Toolbar>
          <ToolbarStub />
        </ToolbarRow>

        <Main>
          <EditorColumn>
            <DocumentFrame>
              <Page>
                <PageHeader>
                  <h2>Welcome to the City Library</h2>
                  <p>Your gateway to knowledge, imagination, and community.</p>
                </PageHeader>
                <PageBody>
                  <PageNav>
                    {navEntries.map(entry => <NavEntry key={entry}>{entry}</NavEntry>)}
                  </PageNav>
                  <Article>
                    <Block>
                      <h3>Library Hours</h3>
                      <p>Monday – Friday: 9:00{'\u2009'}am – 8:00{'\u2009'}pm</p>
                      <p>Saturday: 10:00{'\u2009'}am – 5:00{'\u2009'}pm</p>
                      <p>Sunday: Closed</p>
                    </Block>
                    <Block>
                      <h3>Location</h3>
                      <p>123 Main Street</p>
                      <p>Downtown, <Misspelled>Cityville</Misspelled>, ST 12345</p>
                      <p>Phone: (555) 123-4567</p>
                    </Block>
                    <Block>
                      <h3>About Our Library</h3>
                      <p>
                        The City Library has been serving the community since 1902. We offer a wide range of books,
                        e-books, audiobooks, magazines, and online resources. Join us
                        for <Misspelled>storytimes</Misspelled>, author talks, technology workshops, and more.
                      </p>
                    </Block>
                    <Block>
                      <h3>Quick Links</h3>
                      <ul>
                        {quickLinks.map(link => <li key={link}><a href="#">{link}</a></li>)}
                      </ul>
                    </Block>
                  </Article>
                </PageBody>
                <PageFooter>© 2026 City Library • All Rights Reserved</PageFooter>
              </Page>
              <Scrollbar>
                <svg width="14" height="11" viewBox="0 0 14 11"><path d="M7 1l6 10H1z" fill="#8b8b8b" stroke="#8b8b8b" strokeLinejoin="round" /></svg>
                <ScrollThumb />
                <svg width="14" height="11" viewBox="0 0 14 11"><path d="M1 0h12L7 10z" fill="#8b8b8b" stroke="#8b8b8b" strokeLinejoin="round" /></svg>
              </Scrollbar>
            </DocumentFrame>
            <TabStrip>
              {viewTabs.map((tab, i) => (
                <TabButton key={tab} type="button" $active={i === 0} $layer={viewTabs.length - i}>
                  <TabLabel>{tab}</TabLabel>
                </TabButton>
              ))}
            </TabStrip>
          </EditorColumn>

          <Explorer>
            <ExplorerHeader>
              <h2>Database Explorer</h2>
              <FlatButton type="button" aria-label="Panel menu">
                <Icon size={16}><path d="M4 8h16l-8 9z" fill="#000" /></Icon>
              </FlatButton>
              <FlatButton type="button" aria-label="Close panel"><CrossIcon weight={4} /></FlatButton>
            </ExplorerHeader>
            <ExplorerTools>
              <FlatButton type="button" aria-label="Add">
                <Icon>
                  <path d="M8.500 1h7v7.500H23v7h-7.500V23h-7v-7.500H1v-7h7.500z" fill="#22b02c" stroke="#12731a" strokeWidth="1.500" />
                  <path d="M10.500 3h3v7M3 10.500h8" stroke="#a8f0a8" strokeWidth="1.500" />
                </Icon>
              </FlatButton>
              <FlatButton type="button" aria-label="Remove">
                <Icon>
                  <rect x="2" y="8" width="21" height="9" fill="#b81c24" stroke="#701015" strokeWidth="1.300" />
                  <path d="M4 10.500h15" stroke="#f0a0a4" strokeWidth="1.500" />
                </Icon>
              </FlatButton>
              <FlatButton type="button" aria-label="Refresh"><RefreshIcon /></FlatButton>
            </ExplorerTools>
            <Tree>
              <TreeNode>
                <FlatButton type="button" aria-label="Expand">
                  <Icon size={14}>
                    <rect x="1" y="1" width="22" height="22" fill="#f6f6f6" stroke="#8c8c8c" strokeWidth="2" />
                    <path d="M12 6v12M6 12h12" stroke="#2a4a9a" strokeWidth="2.500" />
                  </Icon>
                </FlatButton>
                <TreeLine />
                <DatabaseIcon />
                <NodeLabel>(Local Tables)</NodeLabel>
              </TreeNode>
            </Tree>
          </Explorer>
        </Main>

        <WindowTabs>
          <WindowTabsRail />
          <WindowTabStrip>
            <TabButton type="button" $tall $layer={2}>
              <TabIcon><PanelIcon /></TabIcon>
              <TabLabel>Web Projects Control Panel</TabLabel>
            </TabButton>
            <TabButton type="button" $tall $layer={1}>
              <TabIcon><PanelIcon /></TabIcon>
              <TabLabel>Control Panel</TabLabel>
            </TabButton>
            <TabButton type="button" $tall $active $layer={3}>
              <TabIcon><GlobeIcon /></TabIcon>
              <TabLabel>HTML Editor: Welcome</TabLabel>
            </TabButton>
          </WindowTabStrip>
        </WindowTabs>

        <StatusBar>
          <StatusCell>openai-compatible  llama  ~1551</StatusCell>
          <StatusCell $dim>Caps</StatusCell>
          <StatusCell $dim>Num</StatusCell>
          <ResizeGrip width="17" height="17" viewBox="0 0 17 17">
            <path d="M13 1h3v3h-3zM13 7h3v3h-3zM13 13h3v3h-3zM7 7h3v3H7zM7 13h3v3H7zM1 13h3v3H1z" fill="#77759a" />
          </ResizeGrip>
        </StatusBar>
      </Window>
    </Desktop>
  </>
);

export default App;
